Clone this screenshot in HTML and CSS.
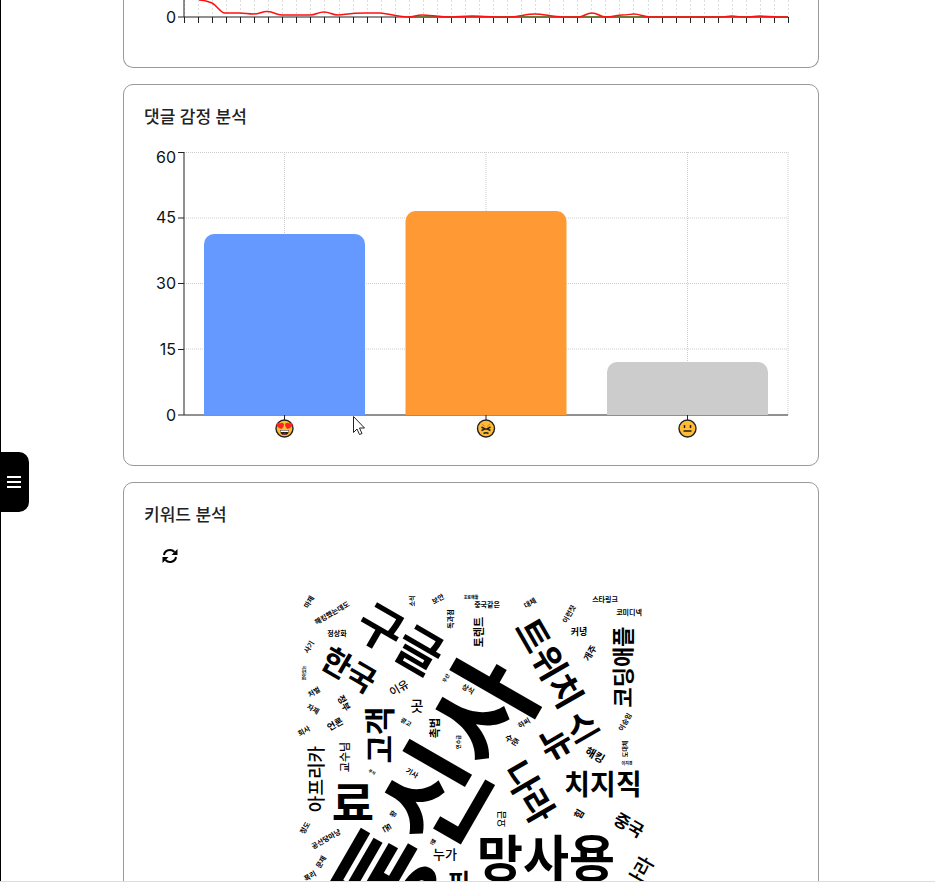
FILE: index.html
```html
<!DOCTYPE html>
<html lang="ko">
<head>
<meta charset="utf-8">
<meta name="viewport" content="width=device-width, initial-scale=1">
<title>댓글 분석</title>
<link rel="stylesheet" href="styles.css">
</head>
<body>
<button class="menu-tab" type="button" aria-label="메뉴">
  <svg width="14" height="12" viewBox="0 0 14 12"><path d="M0 1h14M0 6h14M0 11h14" stroke="#fff" stroke-width="2"/></svg>
</button>
<main class="report">
  <section class="card card-trend">
    <svg class="chart" viewBox="0 0 654 27" id="trend">
      <g id="trend-grid" class="grid"></g>
      <path class="axis" d="M40 0V17M34 17H644"/>
      <g id="trend-ticks" class="axis"></g>
      <path class="under-line" d="M264 17H644"/>
      <path class="trend-line" d="M55 0C60 0 63 1 68 3C74 6 76 13 81 13H95C101 13 104 14 110 14C116 14 118 11 124 11.500C130 12 132 15 138 15H166C172 15 174 12 180 12C186 12 188 15 194 15C201 15 204 13 222 13H236C243 13 252 17 264 17C270 17 272 15 278 15C285 15 296 17 308 17C315 17 318 16 328 16S345 17 364 17C375 17 381 14 391 14C400 14 408 17 420 17H434C440 17 442 13 448 13C454 13 456 17 462 17C469 17 472 15 478 15C484 15 487 14 490 14C496 14 500 17 506 17H574C581 17 584 16 588 16S594 17 602 17C610 17 613 16 616 16S624 17 644 17"/>
      <text class="tick-label" x="32" y="23" text-anchor="end">0</text>
    </svg>
  </section>

  <section class="card">
    <h2>댓글 감정 분석</h2>
    <svg class="chart chart-bars" viewBox="0 0 654 300">
      <g class="grid">
        <path d="M40 9.500H644M40 75H644M40 140.500H644M40 206H644"/>
        <path d="M140.500 9V272M342 9V272M543.500 9V272M644 9V272"/>
      </g>
      <path class="axis" d="M40 9V272M34 9.500H40M34 75H40M34 140.500H40M34 206.500H40M34 272H644M140.500 272V278M342 272V278M543.500 272V278"/>
      <path fill="#6699ff" d="M60 272V101a10 10 0 0 1 10-10h141a10 10 0 0 1 10 10v171z"/>
      <path fill="#ff9933" d="M261.500 272V78a10 10 0 0 1 10-10h141a10 10 0 0 1 10 10v194z"/>
      <path fill="#cccccc" d="M463 272V229a10 10 0 0 1 10-10h141a10 10 0 0 1 10 10v43z"/>
      <g class="tick-label" text-anchor="end">
        <text x="32" y="20">60</text>
        <text x="32" y="80">45</text>
        <text x="32" y="146">30</text>
        <text x="32" y="212">15</text>
        <text x="32" y="278">0</text>
      </g>
      <g transform="translate(140.500 285.500)">
        <circle class="face" r="8.500"/>
        <path fill="#f22" d="M-.5-3.500C-.5-6-3.500-6.500-4.500-5C-6.500-7-9-5-8-3C-7-1-4.500 0-3 .5C-2-.5-1-1.500-.5-3.500zM.5-3.500C.5-6 3.500-6.500 4.500-5C6.500-7 9-5 8-3C7-1 4.500 0 3 .5C2-.5 1-1.500 .5-3.500z"/>
        <path fill="#222" d="M-4.500 1.500H4.500C4.500 4.500 3 6.500 0 6.500S-4.500 4.500-4.500 1.500z"/>
        <path fill="#fff" d="M-4 2H4V3.500H-4z"/><path fill="#e33" d="M-2 6Q0 4 2 6z"/>
      </g>
      <g transform="translate(342 285.500)">
        <circle class="face" r="8.500"/>
        <path class="feature" d="M-4.500-1.500L-1 .5L-4.500 2M4.500-1.500L1 .5L4.500 2M-2.500 5Q0 3.500 2.500 5"/>
        <path fill="none" stroke="#e67a20" d="M-4-4.500L-1-2M4-4.500L1-2"/>
      </g>
      <g transform="translate(543.500 285.500)">
        <circle class="face" r="8.500"/>
        <path class="feature" d="M-3-3.500V-.5M3-3.500V-.5M-4 2.500H4"/>
      </g>
    </svg>
    <svg class="pointer" width="14" height="21" viewBox="0 0 14 21"><path d="M1.500 1.500V17.500L5 14L7.500 19.500L10 18.500L7.500 13H12.500z" fill="#fff" stroke="#222"/></svg>
  </section>

  <section class="card card-cloud">
    <h2>키워드 분석</h2>
    <button class="refresh" type="button" aria-label="새로고침">
      <svg width="16" height="16" viewBox="0 0 16 16"><path fill="none" stroke="#000" stroke-width="2" d="M2 7A6 5.700 0 0 1 12.500 4M14 9A6 5.700 0 0 1 3.500 12"/><path d="M15.500 1V7H9.500zM.5 15V9H6.500z"/></svg>
    </button>
    <svg class="chart cloud" id="cloud" viewBox="0 0 654 600"></svg>
  </section>
</main>
<div class="window-edge"></div>
<script src="charts.js"></script>
</body>
</html>
```
FILE: styles.css
```css
* { box-sizing: border-box; }

body {
  margin: 0;
  height: 100vh;
  overflow: hidden;
  background: #fff;
  border-left: 1px solid #000;
  color: #222;
  font-family: Inter, "Noto Sans CJK KR", sans-serif;
}

.report {
  display: flex;
  flex-direction: column;
  gap: 16px;
  margin: 0 116px 0 122px;
}

.card {
  position: relative;
  flex: none;
  padding: 20px;
  border: 1px solid #999;
  border-radius: 10px;
}

.card-trend {
  padding-top: 0;
  padding-bottom: 40px;
  border-top: 0;
  border-top-left-radius: 0;
  border-top-right-radius: 0;
}

h2 {
  margin: 0;
  font-size: 17px;
  font-weight: 500;
  line-height: 24px;
}

.chart {
  display: block;
  width: 100%;
  overflow: visible;
}

.chart-bars { margin-top: 14px; margin-bottom: 2px; }

.grid { fill: none; stroke: #ccc; stroke-dasharray: 1 1; }
.card-trend .grid { stroke-dasharray: 2 2; stroke: #ddd; }
.axis { fill: none; stroke: #222; }
.under-line { fill: none; stroke: #6b7a3a; stroke-width: 2; }
.trend-line { fill: none; stroke: #f11; stroke-width: 1.5; }
.tick-label { fill: #111; font-size: 16px; }

.face { fill: #fb3; stroke: #222; stroke-width: 1.4; }
.feature { fill: none; stroke: #222; stroke-width: 1.5; }

.pointer { position: absolute; left: 228px; top: 330px; }

.refresh {
  display: block;
  margin: 21px 0 0 18px;
  padding: 0;
  border: 0;
  background: none;
}
.refresh svg { display: block; }

.cloud { margin-top: 20px; }
.cloud text {
  fill: #000;
  font-family: "Noto Sans CJK KR", sans-serif;
  font-weight: 700;
  text-anchor: middle;
}
.cloud .light { font-weight: 500; }

.menu-tab {
  position: fixed;
  left: 0;
  top: 452px;
  display: flex;
  align-items: center;
  width: 29px;
  height: 60px;
  padding: 0 0 0 7px;
  border: 0;
  border-radius: 0 10px 10px 0;
  background: #000;
}

.window-edge {
  position: fixed;
  left: 0;
  right: 0;
  bottom: 0;
  height: 1px;
  background: #ddd;
}
```
FILE: charts.js
```js
const NS = "http://www.w3.org/2000/svg";

function add(parent, name, attrs) {
  const node = document.createElementNS(NS, name);
  for (const key in attrs) node.setAttribute(key, attrs[key]);
  parent.appendChild(node);
  return node;
}

for (let i = 0; i <= 43; i++) {
  const x = Math.round(40 + (604 * i) / 43) + 0.5;
  add(document.getElementById("trend-grid"), "path", { d: `M${x} 0V17` });
  add(document.getElementById("trend-ticks"), "path", { d: `M${x} 17V23` });
}

// word, centre x, centre y, rotation, size, light weight
const words = [
  ["통신사", 434, 796, -60, 107],
  ["구글", 400, 639, 30, 49],
  ["망사용", 546, 858, 0, 50],
  ["료", 353, 803, 0, 46],
  ["트위치", 549, 663, 60, 35],
  ["나라", 529, 792, 60, 35],
  ["뉴스", 569, 735, -30, 34],
  ["한국", 349, 670, 30, 31],
  ["고객", 380, 735, -90, 31],
  ["치지직", 603, 785, 0, 28],
  ["코딩애플", 623, 667, -90, 22],
  ["나라", 639, 874, -60, 20, 1],
  ["아프리카", 316, 779, -90, 18, 1],
  ["중국", 629, 825, 30, 17],
  ["누가", 445, 854, 0, 13, 1],
  ["곳", 417, 706, 0, 14, 1],
  ["해킹", 595, 755, 30, 11],
  ["교수님", 345, 757, -90, 11, 1],
  ["이유", 399, 688, -30, 11, 1],
  ["촉법", 435, 728, -90, 11],
  ["토렌트", 479, 632, -90, 11],
  ["힘", 579, 814, -60, 10],
  ["언론", 335, 724, -30, 9],
  ["정부", 344, 703, 60, 9],
  ["커녕", 579, 632, 0, 9],
  ["요금", 502, 819, -90, 9, 1],
  ["돈", 387, 828, 60, 9],
  ["개주", 590, 653, -60, 9],
  ["수준", 512, 740, 30, 8],
  ["이런짓", 569, 614, -60, 7],
  ["대체", 530, 603, -30, 7],
  ["스타링크", 605, 599, 0, 7],
  ["코미디넥", 629, 612, 0, 7],
  ["중국같은", 487, 604, 0, 7],
  ["호로애들", 471, 598, 0, 4],
  ["보안", 438, 599, -30, 7],
  ["소식", 412, 601, -90, 6],
  ["독과점", 450, 619, -90, 7],
  ["해킹했는데도", 332, 613, -30, 7],
  ["마제", 309, 602, -60, 7],
  ["정상화", 337, 633, 0, 7],
  ["사기", 309, 647, -60, 7],
  ["쏟아있는", 305, 673, -90, 4],
  ["처벌", 314, 692, -30, 7],
  ["자제", 313, 709, 30, 7],
  ["회사", 304, 731, -30, 7],
  ["광고", 406, 722, 30, 6],
  ["우산", 446, 678, -60, 5],
  ["상식", 468, 689, 30, 7],
  ["하씨", 524, 723, -30, 7],
  ["이승임", 625, 722, -60, 7],
  ["도대체", 625, 749, -90, 6],
  ["이지경", 627, 764, 0, 4],
  ["연수급", 458, 742, -90, 5],
  ["주식", 372, 772, 30, 4],
  ["기사", 412, 773, 30, 7],
  ["왕", 393, 814, -60, 7],
  ["뿐", 433, 842, 30, 6],
  ["정도", 305, 828, -60, 7],
  ["공산당마냥", 326, 839, -30, 7],
  ["문제", 321, 862, -60, 7],
  ["폭리", 310, 876, -30, 7],
  ["피", 459, 882, 0, 24]
];

const cloud = document.getElementById("cloud");
for (const [word, x, y, angle, size, light] of words) {
  const text = add(cloud, "text", {
    transform: `translate(${x - 144} ${y - 584}) rotate(${angle})`,
    "font-size": size,
    dy: "0.37em"
  });
  if (light) text.setAttribute("class", "light");
  text.textContent = word;
}
```
